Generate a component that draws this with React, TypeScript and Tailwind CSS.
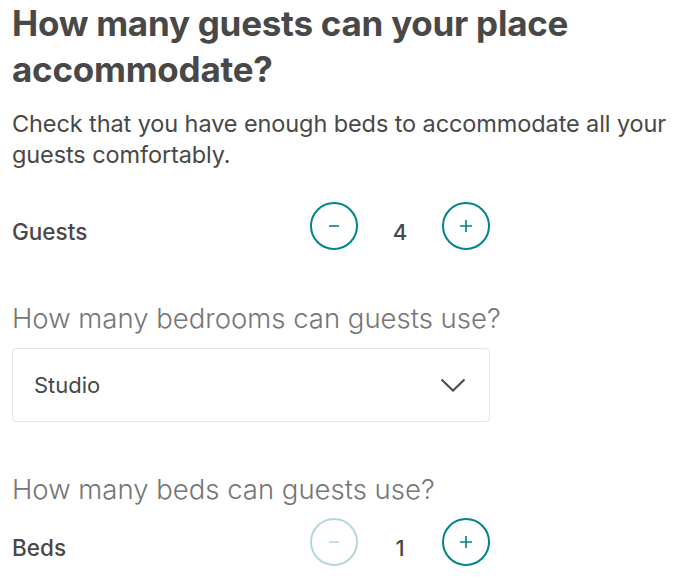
import React from "react";

function Stepper({ value, minDisabled }: { value: number; minDisabled?: boolean }) {
  const tone = minDisabled ? "border-[#b2d8da] text-[#b2d8da]" : "border-[#008489] text-[#008489]";
  return (
    <div className="flex items-center">
      <button className={`w-12 h-12 rounded-full border-2 flex items-center justify-center ${tone}`}>
        <svg width="12" height="12" viewBox="0 0 12 12">
          <path d="M1 6h10" stroke="currentColor" strokeWidth="1.6" />
        </svg>
      </button>
      <span className="w-[84px] text-center text-[22px] leading-[30px] text-[#484848] font-medium pt-3">{value}</span>
      <button className="w-12 h-12 rounded-full border-2 border-[#008489] text-[#008489] flex items-center justify-center">
        <svg width="14" height="14" viewBox="0 0 14 14">
          <path d="M1 7h12M7 1v12" stroke="currentColor" strokeWidth="1.6" />
        </svg>
      </button>
    </div>
  );
}

export default function App() {
  return (
    <div className="px-3 bg-white text-[#484848] font-['Inter',sans-serif]">
      <h1 className="text-[35px] leading-[46px] font-bold tracking-[-0.25px]">
        How many guests can your place accommodate?
      </h1>
      <p className="mt-4 text-[23.5px] leading-[31px] tracking-[-0.1px] w-[666px]">
        Check that you have enough beds to accommodate all your guests comfortably.
      </p>

      <div className="mt-8 flex items-center w-[478px] justify-between">
        <span className="text-[22.5px] leading-[30px] font-medium pt-3">Guests</span>
        <Stepper value={4} />
      </div>

      <h2 className="mt-[50px] text-[27.5px] leading-[36px] font-light text-[#767676]">
        How many bedrooms can guests use?
      </h2>
      <div className="mt-3 w-[478px] h-[74px] border border-[#e4e4e4] rounded flex items-center justify-between pl-[21px] pr-[23px]">
        <span className="text-[22px]">Studio</span>
        <svg width="26" height="14" viewBox="0 0 26 14" fill="none">
          <path d="M1.5 1.5l11.5 11 11.5-11" stroke="#484848" strokeWidth="2" />
        </svg>
      </div>

      <h2 className="mt-[49px] text-[27.5px] leading-[36px] font-light text-[#767676]">
        How many beds can guests use?
      </h2>
      <div className="mt-[11px] flex items-center w-[478px] justify-between">
        <span className="text-[22.5px] leading-[30px] font-medium pt-3">Beds</span>
        <Stepper value={1} minDisabled />
      </div>
    </div>
  );
}
